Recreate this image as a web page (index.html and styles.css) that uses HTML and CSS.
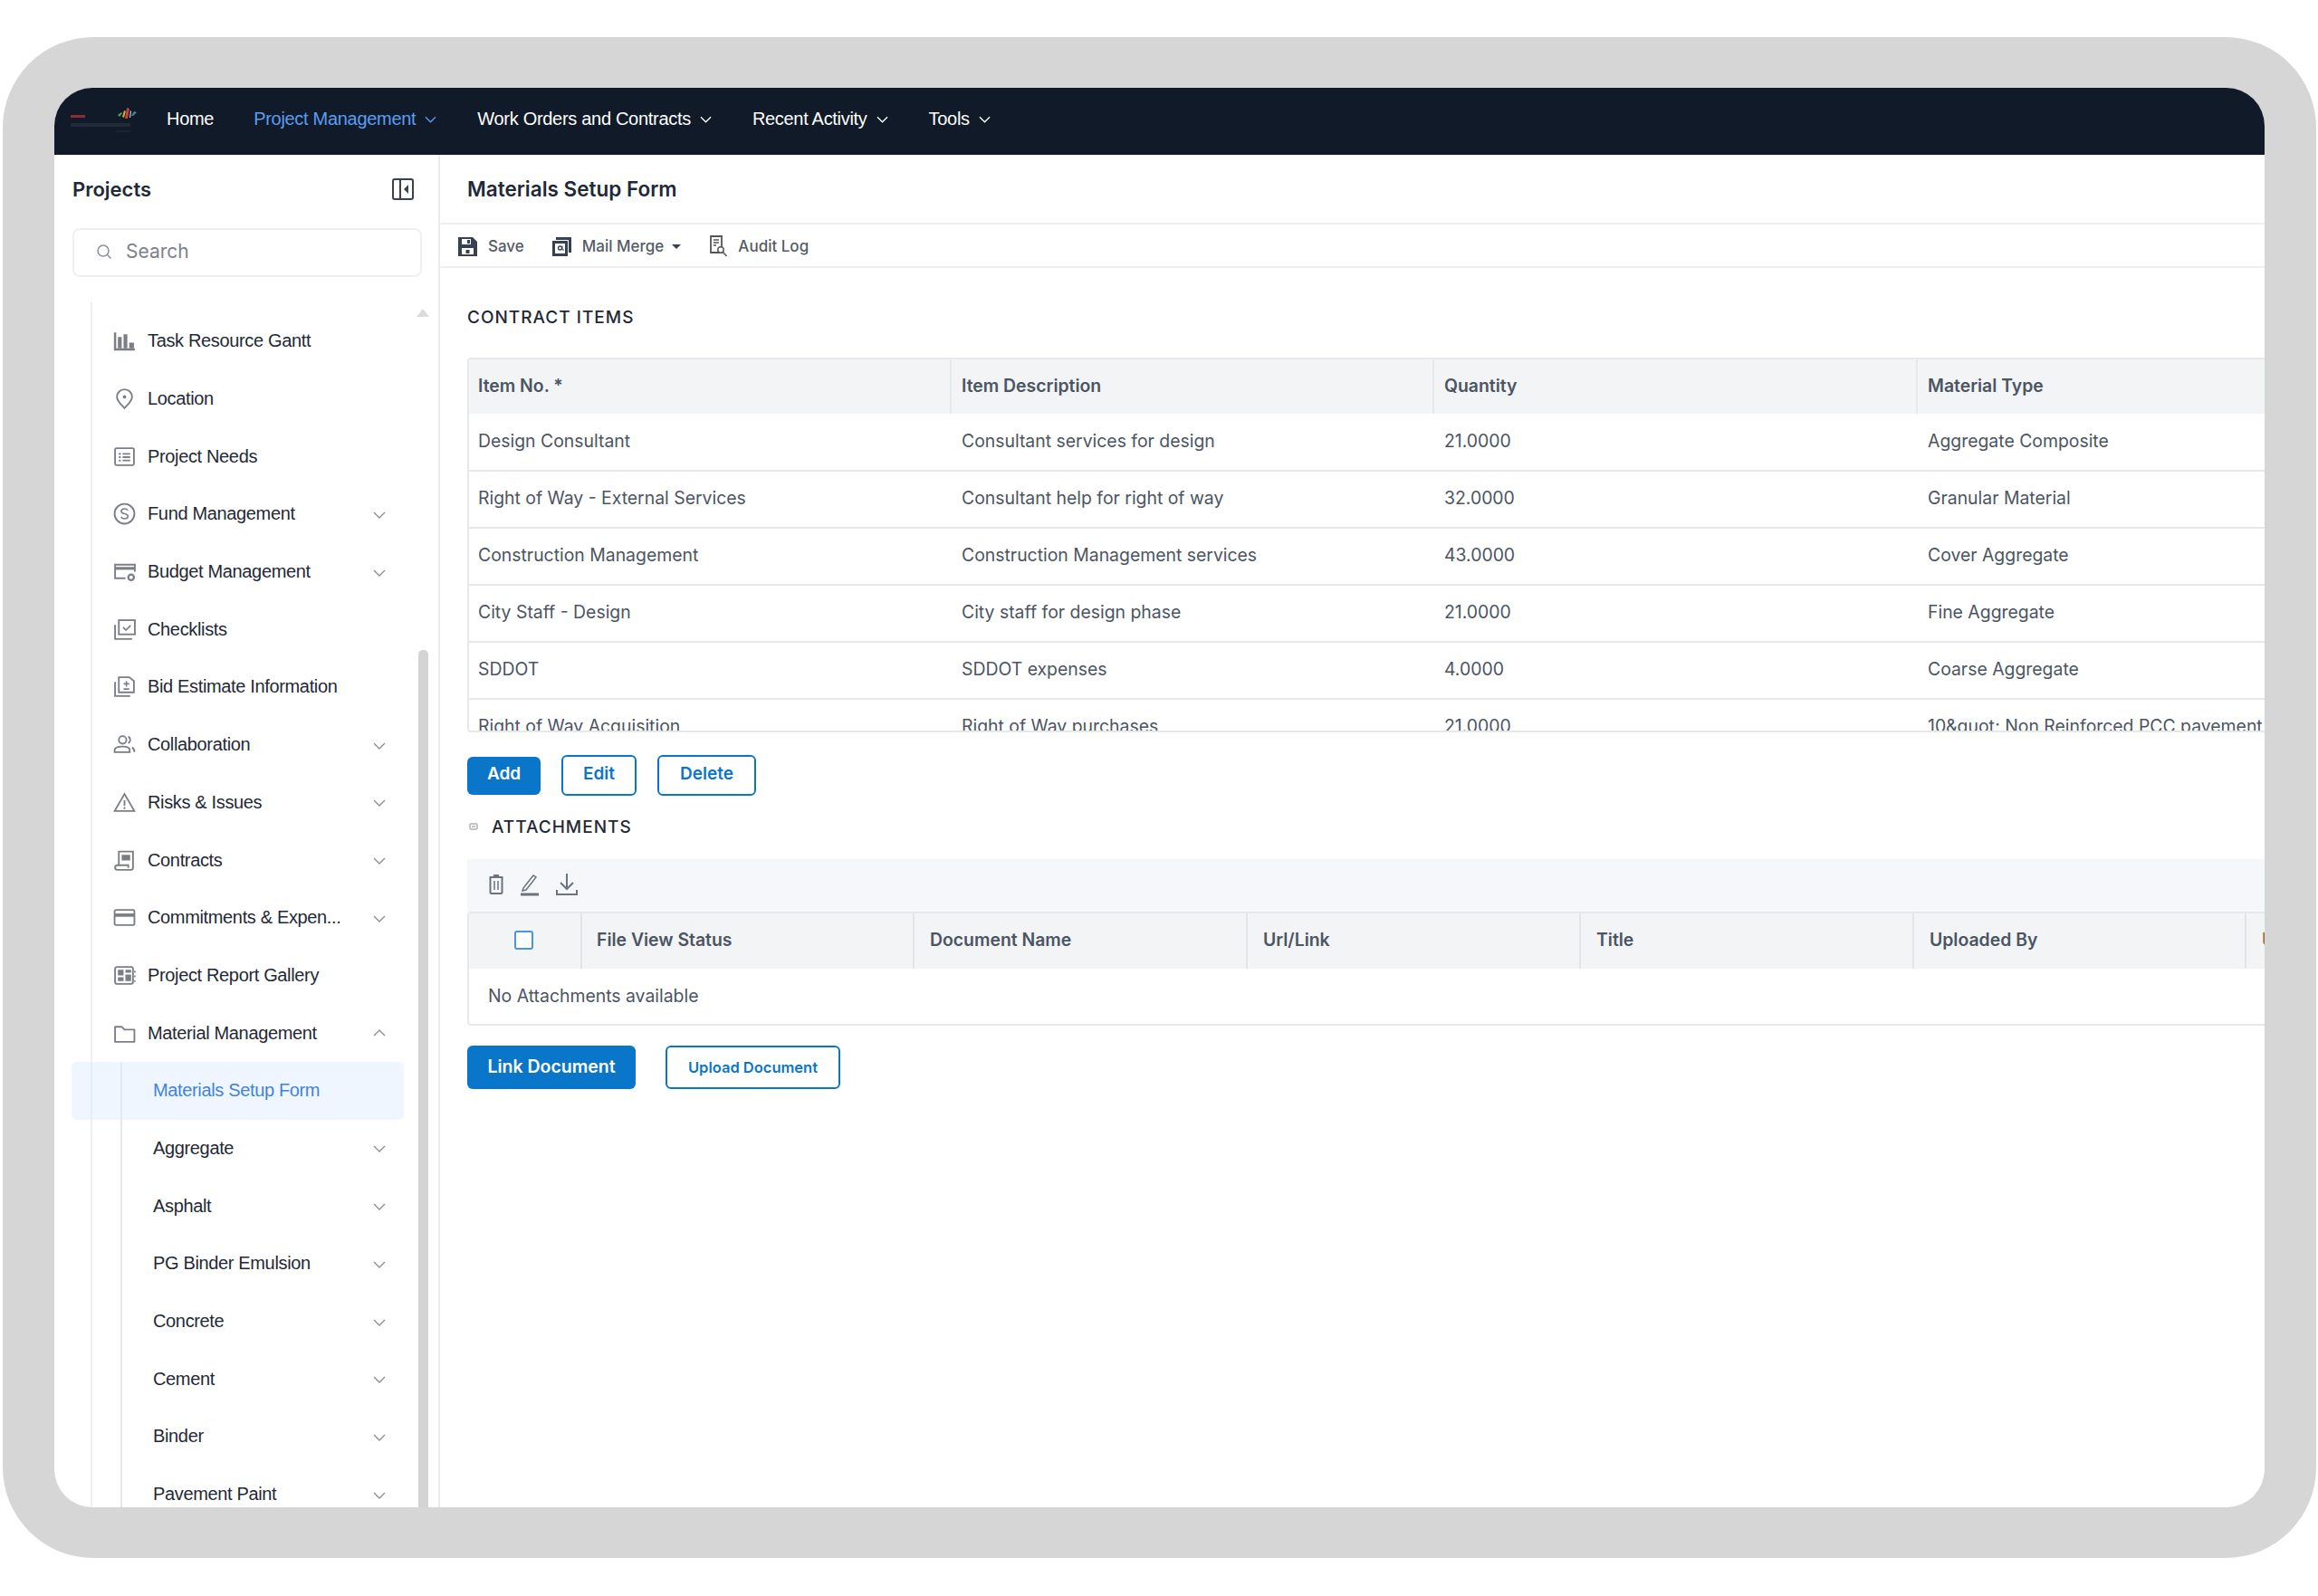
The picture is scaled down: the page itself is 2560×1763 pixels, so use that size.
FILE: index.html
```html
<!DOCTYPE html>
<html lang="en">
<head>
    <meta charset="UTF-8">
    <meta name="viewport" content="width=device-width, initial-scale=1.0">
    <title>Materials Setup Form</title>
    <link rel="stylesheet" href="styles.css">
</head>
<body>
    <svg class="sprite" width="0" height="0">
        <symbol id="chev" viewBox="0 0 14 8"><path d="M1 1l6 6 6-6" fill="none" stroke="currentColor" stroke-width="1.4"/></symbol>
        <symbol id="i-gantt" viewBox="0 0 24 24"><path d="M2 3v18h21" fill="none" stroke="currentColor" stroke-width="2.400"/><path d="M5 8h4v12H5zM11 5h4v15h-4zM17 14h5v6h-5z" fill="currentColor"/></symbol>
        <symbol id="i-pin" viewBox="0 0 24 24"><path d="M12 22c-3-3.500-8-7.500-8-12a8 8 0 0 1 16 0c0 4.500-5 8.500-8 12z" fill="none" stroke="currentColor" stroke-width="1.800"/><circle cx="12" cy="10" r="1.800" fill="currentColor"/></symbol>
        <symbol id="i-needs" viewBox="0 0 24 24"><rect x="2" y="3" width="20" height="18" rx="1.500" fill="none" stroke="currentColor" stroke-width="1.800"/><path d="M6 8h2v2H6zM6 11.500h2v2H6zM6 15h2v2H6z" fill="currentColor"/><path d="M10 9h8M10 12.500h8M10 16h8" stroke="currentColor" stroke-width="1.800"/></symbol>
        <symbol id="i-fund" viewBox="0 0 24 24"><circle cx="12" cy="12" r="10.500" fill="none" stroke="currentColor" stroke-width="1.800"/><path d="M15.500 8.500c-.8-1.300-2-1.800-3.500-1.800-2 0-3.400 1-3.400 2.600 0 3.700 7 1.800 7 5.400 0 1.600-1.500 2.600-3.600 2.600-1.600 0-2.900-.6-3.700-2" fill="none" stroke="currentColor" stroke-width="1.600"/></symbol>
        <symbol id="i-budget" viewBox="0 0 24 24"><path d="M13 19H2V4.500h21V12" fill="none" stroke="currentColor" stroke-width="1.800"/><path d="M2 8.500h21" stroke="currentColor" stroke-width="3"/><circle cx="19" cy="18" r="3" fill="none" stroke="currentColor" stroke-width="2.200"/></symbol>
        <symbol id="i-check" viewBox="0 0 24 24"><path d="M2 7v15h18" fill="none" stroke="currentColor" stroke-width="1.800"/><rect x="6" y="2" width="17" height="15" fill="none" stroke="currentColor" stroke-width="1.800"/><path d="M10.500 9.500l3 3 5-5" fill="none" stroke="currentColor" stroke-width="1.600"/></symbol>
        <symbol id="i-bid" viewBox="0 0 24 24"><path d="M2 7v15h16" fill="none" stroke="currentColor" stroke-width="1.800"/><path d="M6 2h11l5 4v12H6z" fill="none" stroke="currentColor" stroke-width="1.800"/><path d="M14 6v6M11 9h6M11 14.500h6" stroke="currentColor" stroke-width="1.500"/></symbol>
        <symbol id="i-collab" viewBox="0 0 24 24"><circle cx="10" cy="7" r="4" fill="none" stroke="currentColor" stroke-width="1.800"/><path d="M1.500 20v-2c0-2.500 3-4 8.500-4s7.500 1.500 7.500 4v2z" fill="none" stroke="currentColor" stroke-width="1.800"/><path d="M16 3.500a4 4 0 0 1 0 7M20 15c1.500.8 2.500 2 2.500 5" fill="none" stroke="currentColor" stroke-width="1.800"/></symbol>
        <symbol id="i-risk" viewBox="0 0 24 24"><path d="M12 3L1.500 21h21z" fill="none" stroke="currentColor" stroke-width="1.800"/><path d="M12 9.500v6" stroke="currentColor" stroke-width="1.800"/><circle cx="12" cy="18" r="1.100" fill="currentColor"/></symbol>
        <symbol id="i-contract" viewBox="0 0 24 24"><path d="M6 17V2.500h15V20a2 2 0 0 1-2 2H4.500a2.500 2.500 0 0 1 0-5H16v3" fill="none" stroke="currentColor" stroke-width="1.800"/><path d="M9 6h9v6H9z" fill="currentColor"/></symbol>
        <symbol id="i-card" viewBox="0 0 24 24"><rect x="1.500" y="4" width="21" height="16" rx="1.500" fill="none" stroke="currentColor" stroke-width="1.800"/><path d="M1.500 9.500h21" stroke="currentColor" stroke-width="3.500"/></symbol>
        <symbol id="i-report" viewBox="0 0 24 24"><rect x="2" y="3" width="19" height="18" rx="2" fill="none" stroke="currentColor" stroke-width="1.800"/><path d="M5 6h6v6H5zM13 6h6v3h-6zM13 11h6v7h-6zM5 14h6v4H5z" fill="currentColor"/><path d="M23 7v2M23 12v2M23 17v2" stroke="currentColor" stroke-width="1.400"/></symbol>
        <symbol id="i-folder" viewBox="0 0 24 24"><path d="M2 5h7l3 3h10.500v13H2z" fill="none" stroke="currentColor" stroke-width="1.800" stroke-linejoin="round"/></symbol>
    </svg>

    <div class="frame">
        <div class="window">
            <nav class="topnav">
                <svg class="logo" width="74" height="32" viewBox="0 0 74 32">
                    <path d="M0 11h16v3H0z" fill="#8a2c34"/>
                    <path d="M0 20h66v4H0z" fill="#222b38"/>
                    <path d="M50 28h16v2H50z" fill="#1c2532"/>
                    <path d="M52 11l4-3 1 1-3 4z" fill="#5d9b4f"/>
                    <path d="M57 13l2-7 2 1-2 7z" fill="#c9a83a"/>
                    <path d="M60 15l2-12 3 1-2 11z" fill="#c8403a"/>
                    <path d="M65 14l1-8 1 1-1 7z" fill="#ddd"/>
                    <path d="M67 12l3-5 3 1-4 4z" fill="#3f8f9a"/>
                </svg>
                <a class="nav-link">Home</a>
                <a class="nav-link active">Project Management <svg class="nav-chev"><use href="#chev"/></svg></a>
                <a class="nav-link">Work Orders and Contracts <svg class="nav-chev"><use href="#chev"/></svg></a>
                <a class="nav-link">Recent Activity <svg class="nav-chev"><use href="#chev"/></svg></a>
                <a class="nav-link">Tools <svg class="nav-chev"><use href="#chev"/></svg></a>
            </nav>

            <div class="body-row">
                <aside class="sidebar">
                    <div class="side-head">
                        <h2>Projects</h2>
                        <svg width="24" height="24" viewBox="0 0 24 24"><rect x="1" y="1" width="22" height="22" rx="2" fill="none" stroke="#374151" stroke-width="2"/><path d="M9 1v22" stroke="#374151" stroke-width="2"/><path d="M18 7v10l-5-5z" fill="#374151"/></svg>
                    </div>
                    <div class="search">
                        <svg width="18" height="18" viewBox="0 0 18 18"><circle cx="8" cy="8" r="6" fill="none" stroke="#8a8f98" stroke-width="1.500"/><path d="M12.500 12.500l4 4" stroke="#8a8f98" stroke-width="1.500"/></svg>
                        <span>Search</span>
                    </div>
                    <div class="scroll-up"></div>
                    <div class="scroll-thumb"></div>
                    <ul class="menu">
                        <li class="item"><svg class="ico"><use href="#i-gantt"/></svg><span>Task Resource Gantt</span></li>
                        <li class="item"><svg class="ico"><use href="#i-pin"/></svg><span>Location</span></li>
                        <li class="item"><svg class="ico"><use href="#i-needs"/></svg><span>Project Needs</span></li>
                        <li class="item"><svg class="ico"><use href="#i-fund"/></svg><span>Fund Management</span><svg class="chev"><use href="#chev"/></svg></li>
                        <li class="item"><svg class="ico"><use href="#i-budget"/></svg><span>Budget Management</span><svg class="chev"><use href="#chev"/></svg></li>
                        <li class="item"><svg class="ico"><use href="#i-check"/></svg><span>Checklists</span></li>
                        <li class="item"><svg class="ico"><use href="#i-bid"/></svg><span>Bid Estimate Information</span></li>
                        <li class="item"><svg class="ico"><use href="#i-collab"/></svg><span>Collaboration</span><svg class="chev"><use href="#chev"/></svg></li>
                        <li class="item"><svg class="ico"><use href="#i-risk"/></svg><span>Risks &amp; Issues</span><svg class="chev"><use href="#chev"/></svg></li>
                        <li class="item"><svg class="ico"><use href="#i-contract"/></svg><span>Contracts</span><svg class="chev"><use href="#chev"/></svg></li>
                        <li class="item"><svg class="ico"><use href="#i-card"/></svg><span>Commitments &amp; Expen...</span><svg class="chev"><use href="#chev"/></svg></li>
                        <li class="item"><svg class="ico"><use href="#i-report"/></svg><span>Project Report Gallery</span></li>
                        <li class="item"><svg class="ico"><use href="#i-folder"/></svg><span>Material Management</span><svg class="chev up"><use href="#chev"/></svg></li>
                        <li>
                            <ul class="submenu">
                                <li class="item sub active"><span>Materials Setup Form</span></li>
                                <li class="item sub"><span>Aggregate</span><svg class="chev"><use href="#chev"/></svg></li>
                                <li class="item sub"><span>Asphalt</span><svg class="chev"><use href="#chev"/></svg></li>
                                <li class="item sub"><span>PG Binder Emulsion</span><svg class="chev"><use href="#chev"/></svg></li>
                                <li class="item sub"><span>Concrete</span><svg class="chev"><use href="#chev"/></svg></li>
                                <li class="item sub"><span>Cement</span><svg class="chev"><use href="#chev"/></svg></li>
                                <li class="item sub"><span>Binder</span><svg class="chev"><use href="#chev"/></svg></li>
                                <li class="item sub"><span>Pavement Paint</span><svg class="chev"><use href="#chev"/></svg></li>
                            </ul>
                        </li>
                    </ul>
                </aside>

                <main class="content">
                    <h1 class="page-title">Materials Setup Form</h1>
                    <div class="toolbar">
                        <span class="tool">
                            <svg width="23" height="23" viewBox="0 0 23 23"><path d="M1 1h16l5 5v16H1z" fill="#374151"/><path d="M5 3h10v6H5z" fill="#fff"/><path d="M11 4h3v4h-3z" fill="#374151"/><path d="M5 13h13v7H5z" fill="#fff"/><path d="M9.500 15h4v4h-4z" fill="#374151"/></svg>
                            Save
                        </span>
                        <span class="tool">
                            <svg width="23" height="23" viewBox="0 0 23 23"><path d="M5 1h17v17h-3V4H5z" fill="#374151"/><path d="M1 5h17v17H1z" fill="#374151"/><path d="M4 8h11v11H4z" fill="#fff"/><circle cx="9.500" cy="13" r="2" fill="none" stroke="#374151" stroke-width="1.300"/><path d="M12 10.500v4.500h2" fill="none" stroke="#374151"/></svg>
                            Mail Merge
                            <span class="caret"></span>
                        </span>
                        <span class="tool">
                            <svg width="20" height="24" viewBox="0 0 20 24"><path d="M1 1h12v18H1z" fill="none" stroke="#555" stroke-width="1.800"/><path d="M4 5h6M4 8h6M4 11h3" stroke="#555" stroke-width="1.400"/><circle cx="12" cy="16" r="3.200" fill="#fff" stroke="#555" stroke-width="1.500"/><path d="M14.500 18.500l4 4.500" stroke="#555" stroke-width="1.500"/></svg>
                            Audit Log
                        </span>
                    </div>

                    <section class="form-body">
                        <h3 class="section-title items-title">CONTRACT ITEMS</h3>
                        <div class="table-clip">
                            <table class="grid">
                                <thead>
                                    <tr><th>Item No. *</th><th>Item Description</th><th>Quantity</th><th>Material Type</th></tr>
                                </thead>
                                <tbody>
                                    <tr><td>Design Consultant</td><td>Consultant services for design</td><td>21.0000</td><td>Aggregate Composite</td></tr>
                                    <tr><td>Right of Way - External Services</td><td>Consultant help for right of way</td><td>32.0000</td><td>Granular Material</td></tr>
                                    <tr><td>Construction Management</td><td>Construction Management services</td><td>43.0000</td><td>Cover Aggregate</td></tr>
                                    <tr><td>City Staff - Design</td><td>City staff for design phase</td><td>21.0000</td><td>Fine Aggregate</td></tr>
                                    <tr><td>SDDOT</td><td>SDDOT expenses</td><td>4.0000</td><td>Coarse Aggregate</td></tr>
                                    <tr><td>Right of Way Acquisition</td><td>Right of Way purchases</td><td>21.0000</td><td>10&amp;quot; Non Reinforced PCC pavement</td></tr>
                                </tbody>
                            </table>
                        </div>

                        <div class="btn-row">
                            <button class="btn primary add">Add</button>
                            <button class="btn outline edit">Edit</button>
                            <button class="btn outline del">Delete</button>
                        </div>

                        <div class="attach-head">
                            <svg width="10" height="8" viewBox="0 0 10 8"><rect x="1" y="1" width="8" height="6" rx="1" fill="none" stroke="#888"/><path d="M3 4h4" stroke="#888"/></svg>
                            <h3 class="section-title">ATTACHMENTS</h3>
                        </div>

                        <div class="attach-tools">
                            <svg width="16" height="22" viewBox="0 0 16 22"><path d="M1.500 3h13v17a1 1 0 0 1-1 1h-11a1 1 0 0 1-1-1z" fill="none" stroke="#6b7280" stroke-width="2"/><path d="M5 1h6" stroke="#6b7280" stroke-width="2"/><path d="M6 7v10M10 7v10" stroke="#6b7280" stroke-width="1.500"/></svg>
                            <svg width="20" height="26" viewBox="0 0 20 26"><path d="M3 17L14 3l3 2L6 19l-4 1z" fill="none" stroke="#6b7280" stroke-width="1.500"/><path d="M0 24h20" stroke="#6b7280" stroke-width="3"/></svg>
                            <svg width="24" height="26" viewBox="0 0 24 26"><path d="M12 1v16M5 11l7 7 7-7" fill="none" stroke="#6b7280" stroke-width="2"/><path d="M1 19v5h22v-5" fill="none" stroke="#6b7280" stroke-width="2"/></svg>
                        </div>
                        <div class="attach-table">
                            <div class="attach-row">
                                <div class="col-check"><span class="checkbox"></span></div>
                                <div class="col col-a">File View Status</div>
                                <div class="col col-b">Document Name</div>
                                <div class="col col-b">Url/Link</div>
                                <div class="col col-b">Title</div>
                                <div class="col col-c">Uploaded By</div>
                                <div class="col col-d">Uploaded On</div>
                            </div>
                            <div class="attach-empty">No Attachments available</div>
                        </div>

                        <div class="doc-row">
                            <button class="btn primary link-doc">Link Document</button>
                            <button class="btn outline upload-doc">Upload Document</button>
                        </div>
                    </section>
                </main>
            </div>
        </div>
    </div>
</body>
</html>
```

FILE: styles.css
```css
* {
    box-sizing: border-box;
}
html, body {
    margin: 0;
    height: 100%;
    overflow: hidden;
}
body {
    padding: 41px 2px 0 3px;
    background: #fff;
    font-family: Inter, "Liberation Sans", sans-serif;
}
.sprite {
    position: absolute;
}
ul {
    list-style: none;
    margin: 0;
    padding: 0;
}
h1, h2, h3 {
    margin: 0;
}

.frame {
    height: 1680px;
    padding: 56px 57px 56px 57px;
    border-radius: 100px;
    background: #d6d6d6;
}
.window {
    height: 100%;
    display: flex;
    flex-direction: column;
    overflow: hidden;
    border-radius: 42px;
    background: #fff;
}

/* top nav */
.topnav {
    flex: none;
    height: 74px;
    padding: 0 0 5px 18px;
    display: flex;
    align-items: center;
    background: #101a28;
    font-family: "Liberation Sans", Arial, sans-serif;
    font-size: 20px;
    letter-spacing: -0.3px;
    color: #fff;
}
.logo {
    margin-right: 32px;
}
.nav-link {
    display: flex;
    align-items: center;
    gap: 8px;
    margin-right: 45px;
    white-space: nowrap;
}
.nav-link:nth-of-type(1) {
    margin-right: 44px;
}
.nav-link.active {
    color: #5c9df2;
}
.nav-chev {
    width: 13px;
    height: 8px;
    margin-left: 2px;
}

.body-row {
    flex: 1;
    min-height: 0;
    display: flex;
}

/* left side */
.sidebar {
    position: relative;
    flex: none;
    width: 426px;
    overflow: hidden;
    border-right: 2px solid #ececee;
}
.side-head {
    height: 81px;
    padding: 0 27px 5px 20px;
    display: flex;
    align-items: center;
    justify-content: space-between;
}
.side-head h2 {
    font-size: 22px;
    font-weight: 600;
    color: #1f2937;
}
.search {
    height: 54px;
    width: 386px;
    margin-left: 20px;
    padding: 0 0 3px 24px;
    display: flex;
    align-items: center;
    gap: 15px;
    border: 2px solid #eff0f2;
    border-radius: 8px;
    font-size: 21px;
    color: #7c828c;
}
.scroll-up {
    position: absolute;
    left: 400px;
    top: 170px;
    width: 0;
    height: 0;
    border-left: 7px solid transparent;
    border-right: 7px solid transparent;
    border-bottom: 9px solid #dcdcdc;
}
.scroll-thumb {
    position: absolute;
    left: 402px;
    top: 547px;
    bottom: 0;
    width: 11px;
    border-radius: 5px 5px 0 0;
    background: #d4d4d4;
}
.menu {
    margin: 27px 0 0 40px;
    width: 346px;
    border-left: 2px solid #eef0f2;
    padding-top: 12px;
    font-family: "Liberation Sans", Arial, sans-serif;
    font-size: 20px;
    letter-spacing: -0.35px;
    color: #1f2937;
}
.item {
    height: 63.7px;
    padding-left: 23px;
    padding-right: 20px;
    display: flex;
    align-items: center;
    white-space: nowrap;
}
.ico {
    flex: none;
    width: 25px;
    height: 25px;
    margin-right: 13px;
    color: #7b7f85;
}
.chev {
    flex: none;
    width: 14px;
    height: 8px;
    margin: 2px 0 0 auto;
    color: #8d8f94;
}
.chev.up {
    margin-top: 0;
    transform: rotate(180deg);
}
.submenu {
    margin-left: 31px;
    border-left: 2px solid #e6e8eb;
}
.item.sub {
    padding-left: 34px;
    padding-right: 20px;
}
.item.active {
    margin-left: -56px;
    padding-left: 90px;
    border-radius: 6px;
    background: rgba(219, 234, 254, 0.42);
    color: #3f83e0;
}

/* main area */
.content {
    flex: 1;
    min-width: 0;
    overflow: hidden;
}
.page-title {
    height: 77px;
    padding: 0 0 0 30px;
    display: flex;
    align-items: center;
    border-bottom: 2px solid #eeeff1;
    font-size: 22.5px;
    font-weight: 600;
    color: #1f2937;
}
.toolbar {
    height: 48px;
    padding: 2px 0 0 19px;
    display: flex;
    align-items: center;
    gap: 30px;
    border-bottom: 2px solid #eeeff1;
    font-size: 17px;
    font-weight: 500;
    color: #555b65;
}
.tool {
    display: flex;
    align-items: center;
    gap: 11px;
}
.caret {
    margin: 0 2px 0 -2px;
    border-left: 5px solid transparent;
    border-right: 5px solid transparent;
    border-top: 5px solid #374151;
}
.form-body {
    padding-left: 30px;
}
.section-title {
    font-size: 19px;
    font-weight: 500;
    letter-spacing: 1px;
    color: #1f2937;
}
.items-title {
    height: 99px;
    display: flex;
    align-items: center;
    padding-top: 10px;
}
.table-clip {
    height: 414px;
    overflow: hidden;
    border: 2px solid #e7e8ea;
    border-right: 0;
    border-radius: 4px 0 0 4px;
}
.grid {
    width: 2136px;
    table-layout: fixed;
    border-collapse: collapse;
    font-size: 19.4px;
    color: #4b5563;
}
.grid th {
    height: 60px;
    padding: 0 11px 2px;
    text-align: left;
    font-weight: 600;
    background: #f3f4f6;
    border-left: 2px solid #e7e8ea;
}
.grid th:first-child {
    width: 532px;
    padding-left: 10px;
    border-left: 0;
}
.grid th:nth-child(2) {
    width: 533px;
}
.grid th:nth-child(3) {
    width: 534px;
}
.grid td {
    height: 63px;
    padding: 0 12px 3px;
    white-space: nowrap;
    border-bottom: 2px solid #e7e8ea;
}
.grid td:first-child {
    padding-left: 10px;
}

.btn {
    font-family: inherit;
    font-weight: 600;
    border-radius: 6px;
    cursor: pointer;
}
.btn.primary {
    border: 0;
    background: #0a76c9;
    color: #fff;
}
.btn.outline {
    border: 2px solid #0a76c9;
    background: #fff;
    color: #0a76c9;
}
.btn-row {
    margin-top: 25px;
    display: flex;
    align-items: center;
}
.btn-row .btn {
    font-size: 19px;
    padding: 0 0 5px;
}
.add {
    width: 81px;
    height: 42px;
    margin-right: 23px;
}
.edit {
    width: 83px;
    height: 45px;
    margin-right: 23px;
}
.del {
    width: 109px;
    height: 45px;
}
.attach-head {
    margin-top: 20px;
    height: 28px;
    padding-left: 2px;
    display: flex;
    align-items: center;
    gap: 15px;
}
.attach-tools {
    margin-top: 22px;
    height: 58px;
    padding: 0 0 3px 24px;
    display: flex;
    align-items: center;
    gap: 19px;
    background: #f5f7fa;
}
.attach-table {
    height: 126px;
    overflow: hidden;
    border: 2px solid #e7e8ea;
    border-right: 0;
    border-radius: 4px 0 0 4px;
}
.attach-row {
    height: 61px;
    display: flex;
    align-items: center;
    background: #f3f4f6;
    font-size: 19.4px;
    font-weight: 600;
    color: #4b5563;
}
.col-check {
    flex: none;
    width: 123px;
    height: 100%;
    padding: 0 0 3px 50px;
    display: flex;
    align-items: center;
}
.checkbox {
    width: 21px;
    height: 21px;
    border: 2px solid #4a97d6;
    border-radius: 3px;
    background: #fff;
}
.col {
    flex: none;
    height: 100%;
    padding: 0 0 3px 17px;
    display: flex;
    align-items: center;
    border-left: 2px solid #e2e4e7;
    white-space: nowrap;
}
.col-a {
    width: 367px;
    padding-left: 16px;
}
.col-b {
    width: 368px;
}
.col-c {
    width: 367px;
}
.col-d {
    width: 200px;
    color: #8a6a4f;
}
.attach-empty {
    height: 60px;
    padding-left: 21px;
    display: flex;
    align-items: center;
    font-size: 19.4px;
    color: #4b5563;
}
.doc-row {
    margin-top: 22px;
    display: flex;
    gap: 33px;
}
.link-doc {
    width: 186px;
    height: 48px;
    padding: 0 0 3px;
    font-size: 19.5px;
}
.upload-doc {
    width: 193px;
    height: 48px;
    font-size: 16.5px;
}
```
